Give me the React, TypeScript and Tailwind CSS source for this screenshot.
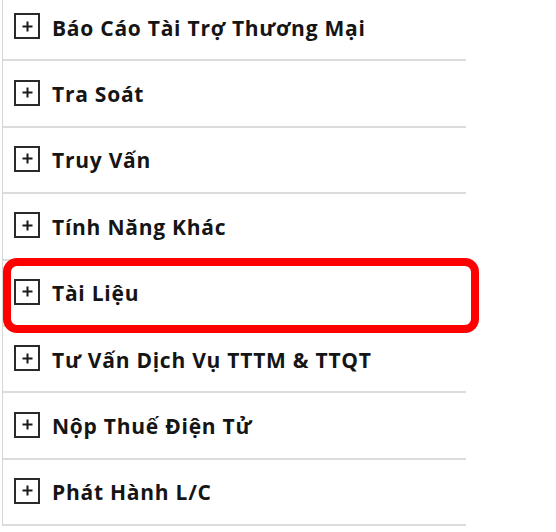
const items = [
  "Báo Cáo Tài Trợ Thương Mại",
  "Tra Soát",
  "Truy Vấn",
  "Tính Năng Khác",
  "Tài Liệu",
  "Tư Vấn Dịch Vụ TTTM & TTQT",
  "Nộp Thuế Điện Tử",
  "Phát Hành L/C",
];

function PlusBox() {
  return (
    <span className="flex h-[26px] w-[26px] shrink-0 items-center justify-center border-2 border-[#2a2a2a]">
      <svg width="11" height="11" viewBox="0 0 11 11">
        <path d="M5.5 0.5v10M0.5 5.5h10" stroke="#1a1a1a" strokeWidth="2" />
      </svg>
    </span>
  );
}

export default function App() {
  return (
    <div className="min-h-screen overflow-hidden bg-white">
      <div className="-mt-[5px] ml-[2px] w-[464px] border-l border-[#d6d6d6]">
        {items.map((label, i) => (
          <div
            key={label}
            className="relative flex h-[66.4px] items-center gap-3 border-b-2 border-[#dcdcdc] pl-[11px] pb-[2px]"
          >
            <PlusBox />
            <span className="pt-[4px] font-['Open_Sans',sans-serif] text-[21px] font-bold leading-none tracking-[0.75px] text-[#151515]">
              {label}
            </span>
            {i === 4 && (
              <div className="absolute -top-[3px] left-0 h-[75px] w-[476px] rounded-[14px] border-[8px] border-[#ff0000]" />
            )}
          </div>
        ))}
      </div>
    </div>
  );
}
